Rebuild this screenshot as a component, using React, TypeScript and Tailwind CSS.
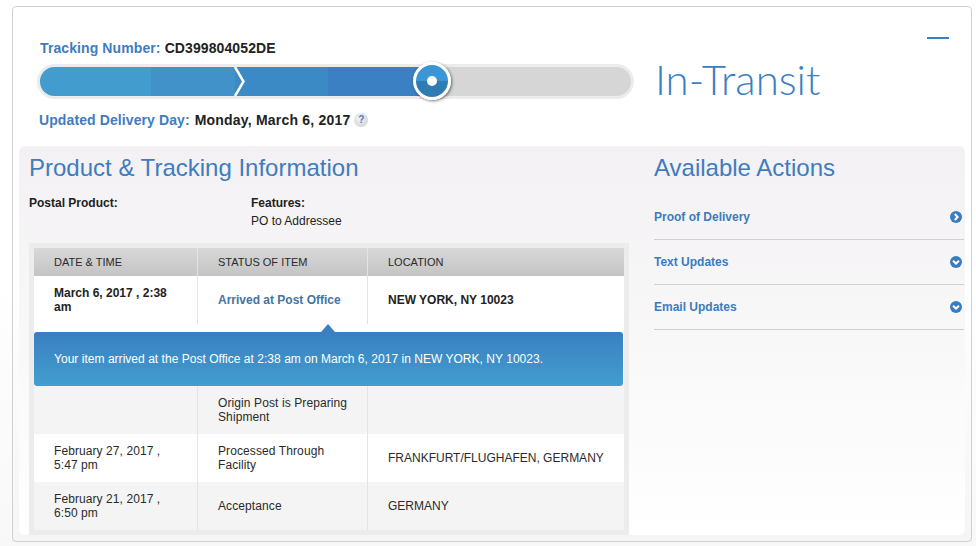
import React from 'react';

const sans = "font-['Liberation_Sans',Arial,sans-serif]";

function Chevron({ dir }: { dir: 'right' | 'down' }) {
    return (
        <svg width="12" height="12" viewBox="0 0 12 12" className="shrink-0">
            <circle cx="6" cy="6" r="6" fill="#3a7cbf" />
            <path
                d={dir === 'right' ? 'M4.8 3 L7.6 6 L4.8 9' : 'M3 4.8 L6 7.6 L9 4.8'}
                fill="none"
                stroke="#fff"
                strokeWidth="2"
            />
        </svg>
    );
}

function ActionRow({ label, dir }: { label: string; dir: 'right' | 'down' }) {
    return (
        <div className="flex h-[45px] items-center justify-between border-b border-[#d0d0d0] pr-[2px] pb-[1px]">
            <span className="text-[12px] font-bold text-[#3a7cbf]">{label}</span>
            <Chevron dir={dir} />
        </div>
    );
}

function Row({ date, status, location, bg }: { date: string; status: string; location: string; bg: string }) {
    return (
        <div className={`flex h-[48px] items-center text-[12px] leading-[14px] text-[#2a2a2a] ${bg}`}>
            <div className="flex h-full w-[164px] items-center border-r border-[#e4e4e4] pl-[20px] pr-[24px] tracking-[0.08px]">{date}</div>
            <div className="flex h-full w-[170px] items-center border-r border-[#e4e4e4] pl-[20px] pr-[10px] tracking-[0.1px]">{status}</div>
            <div className="flex-1 pl-[20px]">{location}</div>
        </div>
    );
}

function App() {
    return (
        <div className={`h-[546px] w-[976px] overflow-hidden bg-[linear-gradient(#ffffff_50%,#f8f8f8_100%)] pl-[12px] pt-[6px] ${sans}`}>
            <div className="relative h-[536px] w-[960px] rounded-[4px] border border-[#d0d0d0] bg-[linear-gradient(#ffffff_50%,#f5f5f5_100%)] px-[6px]">
                <div className="absolute left-[914px] top-[30px] h-[2px] w-[22px] bg-[#3a80c2]" />

                <div className="flex h-[139px] pl-[18px] pt-[33px]">
                    <div className="w-[597px]">
                        <p className="pl-[3px] text-[14px] font-bold leading-[16px] tracking-[0.1px] text-[#222]">
                            <span className="text-[#3f7cbf]">Tracking Number:</span> CD399804052DE
                        </p>
                        <div className="relative mt-[8px] h-[35px] rounded-full bg-[#ececec] p-[3px]">
                            <div className="flex h-[29px] overflow-hidden rounded-full bg-[#d6d6d6]">
                                <div className="h-full w-[111px] bg-[#429ccd]" />
                                <div className="h-full w-[84px] bg-[#4092c9]" />
                                <div className="h-full w-[93px] bg-[#3c8ac5]" />
                                <div className="h-full w-[104px] bg-[#3a80c2]" />
                            </div>
                            <svg width="12" height="29" viewBox="0 0 12 29" className="absolute left-[197px] top-[3px]">
                                <path d="M1 0 L9.5 14.5 L1 29" fill="none" stroke="#fff" strokeWidth="2.5" />
                            </svg>
                            <div className="absolute left-[376px] top-[-2px] h-[38px] w-[38px] rounded-full border-[3px] border-white bg-[linear-gradient(#3a96d6_0_50%,#2f7cb4_50%_100%)] shadow-[1px_1px_3px_rgba(0,0,0,0.55)]">
                                <div className="absolute left-[11px] top-[11px] h-[10px] w-[10px] rounded-full bg-white" />
                            </div>
                        </div>
                        <div className="mt-[12px] flex items-center pl-[2px] text-[14px] font-bold leading-[18px] tracking-[0.1px] text-[#222]">
                            <span className="text-[#3f7cbf]">Updated Delivery Day:</span>
                            <span className="ml-[5px] tracking-[0.2px]">Monday, March 6, 2017</span>
                            <span className="ml-[4px] flex h-[14px] w-[14px] items-center justify-center rounded-full bg-[radial-gradient(circle_at_40%_35%,#f4f4f4,#c9ccd0)] text-[10px] text-[#4a80c0]">?</span>
                        </div>
                    </div>
                    <div className="ml-[21px] mt-[21px] font-['Lato',sans-serif] text-[42px] font-light leading-[36px] text-[#3a80c2]">In-Transit</div>
                </div>

                <div className="flex h-[389px] rounded-[6px] bg-[linear-gradient(#f3f1f3,#ffffff)] pl-[10px] pr-[1px]">
                    <div className="w-[600px]">
                        <h2 className="pt-[8px] text-[24px] font-normal leading-[28px] text-[#3f7cbf]">Product &amp; Tracking Information</h2>
                        <div className="mt-[12px] flex h-[49px] text-[12px] leading-[18px] text-[#222]">
                            <div className="w-[222px] font-bold">Postal Product:</div>
                            <div>
                                <div className="font-bold">Features:</div>
                                <div>PO to Addressee</div>
                            </div>
                        </div>
                        <div className="h-[292px] bg-[#ececec] p-[5px]">
                            <div className="flex h-[28px] items-center bg-[linear-gradient(#d8d8d8,#c4c4c4)] text-[11px] text-[#2a2a2a]">
                                <div className="flex h-full w-[164px] items-center border-r border-[#e4e4e4] pl-[20px]">DATE &amp; TIME</div>
                                <div className="flex h-full w-[170px] items-center border-r border-[#e4e4e4] pl-[20px]">STATUS OF ITEM</div>
                                <div className="pl-[20px]">LOCATION</div>
                            </div>
                            <div className="flex h-[48px] bg-white text-[12px] font-bold leading-[14px] text-[#222]">
                                <div className="flex h-full w-[164px] items-center border-r border-[#e4e4e4] pl-[20px] pr-[24px]">March 6, 2017 , 2:38 am</div>
                                <div className="flex h-full w-[170px] items-center border-r border-[#e4e4e4] pl-[20px] text-[#44749f]">Arrived at Post Office</div>
                                <div className="flex items-center pl-[20px]">NEW YORK, NY 10023</div>
                            </div>
                            <div className="bg-white pt-[8px]">
                                <div className="relative flex h-[54px] w-[589px] items-center rounded-[3px] bg-[linear-gradient(#3a7fc1,#429ecd)] pl-[20px] text-[12px] font-normal tracking-[0.03px] text-white">
                                    <div className="absolute left-[287px] top-[-8px] h-0 w-0 border-x-[7px] border-b-[8px] border-x-transparent border-b-[#3a7fc1]" />
                                    Your item arrived at the Post Office at 2:38 am on March 6, 2017 in NEW YORK, NY 10023.
                                </div>
                            </div>
                            <Row bg="bg-[#f4f4f4]" date="" status="Origin Post is Preparing Shipment" location="" />
                            <Row bg="bg-white" date="February 27, 2017 , 5:47 pm" status="Processed Through Facility" location="FRANKFURT/FLUGHAFEN, GERMANY" />
                            <Row bg="bg-[#f4f4f4]" date="February 21, 2017 , 6:50 pm" status="Acceptance" location="GERMANY" />
                        </div>
                    </div>
                    <div className="ml-[25px] flex-1">
                        <h2 className="pt-[8px] text-[24px] font-normal leading-[28px] text-[#3f7cbf]">Available Actions</h2>
                        <div className="mt-[13px]">
                            <ActionRow label="Proof of Delivery" dir="right" />
                            <ActionRow label="Text Updates" dir="down" />
                            <ActionRow label="Email Updates" dir="down" />
                        </div>
                    </div>
                </div>
            </div>
        </div>
    );
}

export default App;
